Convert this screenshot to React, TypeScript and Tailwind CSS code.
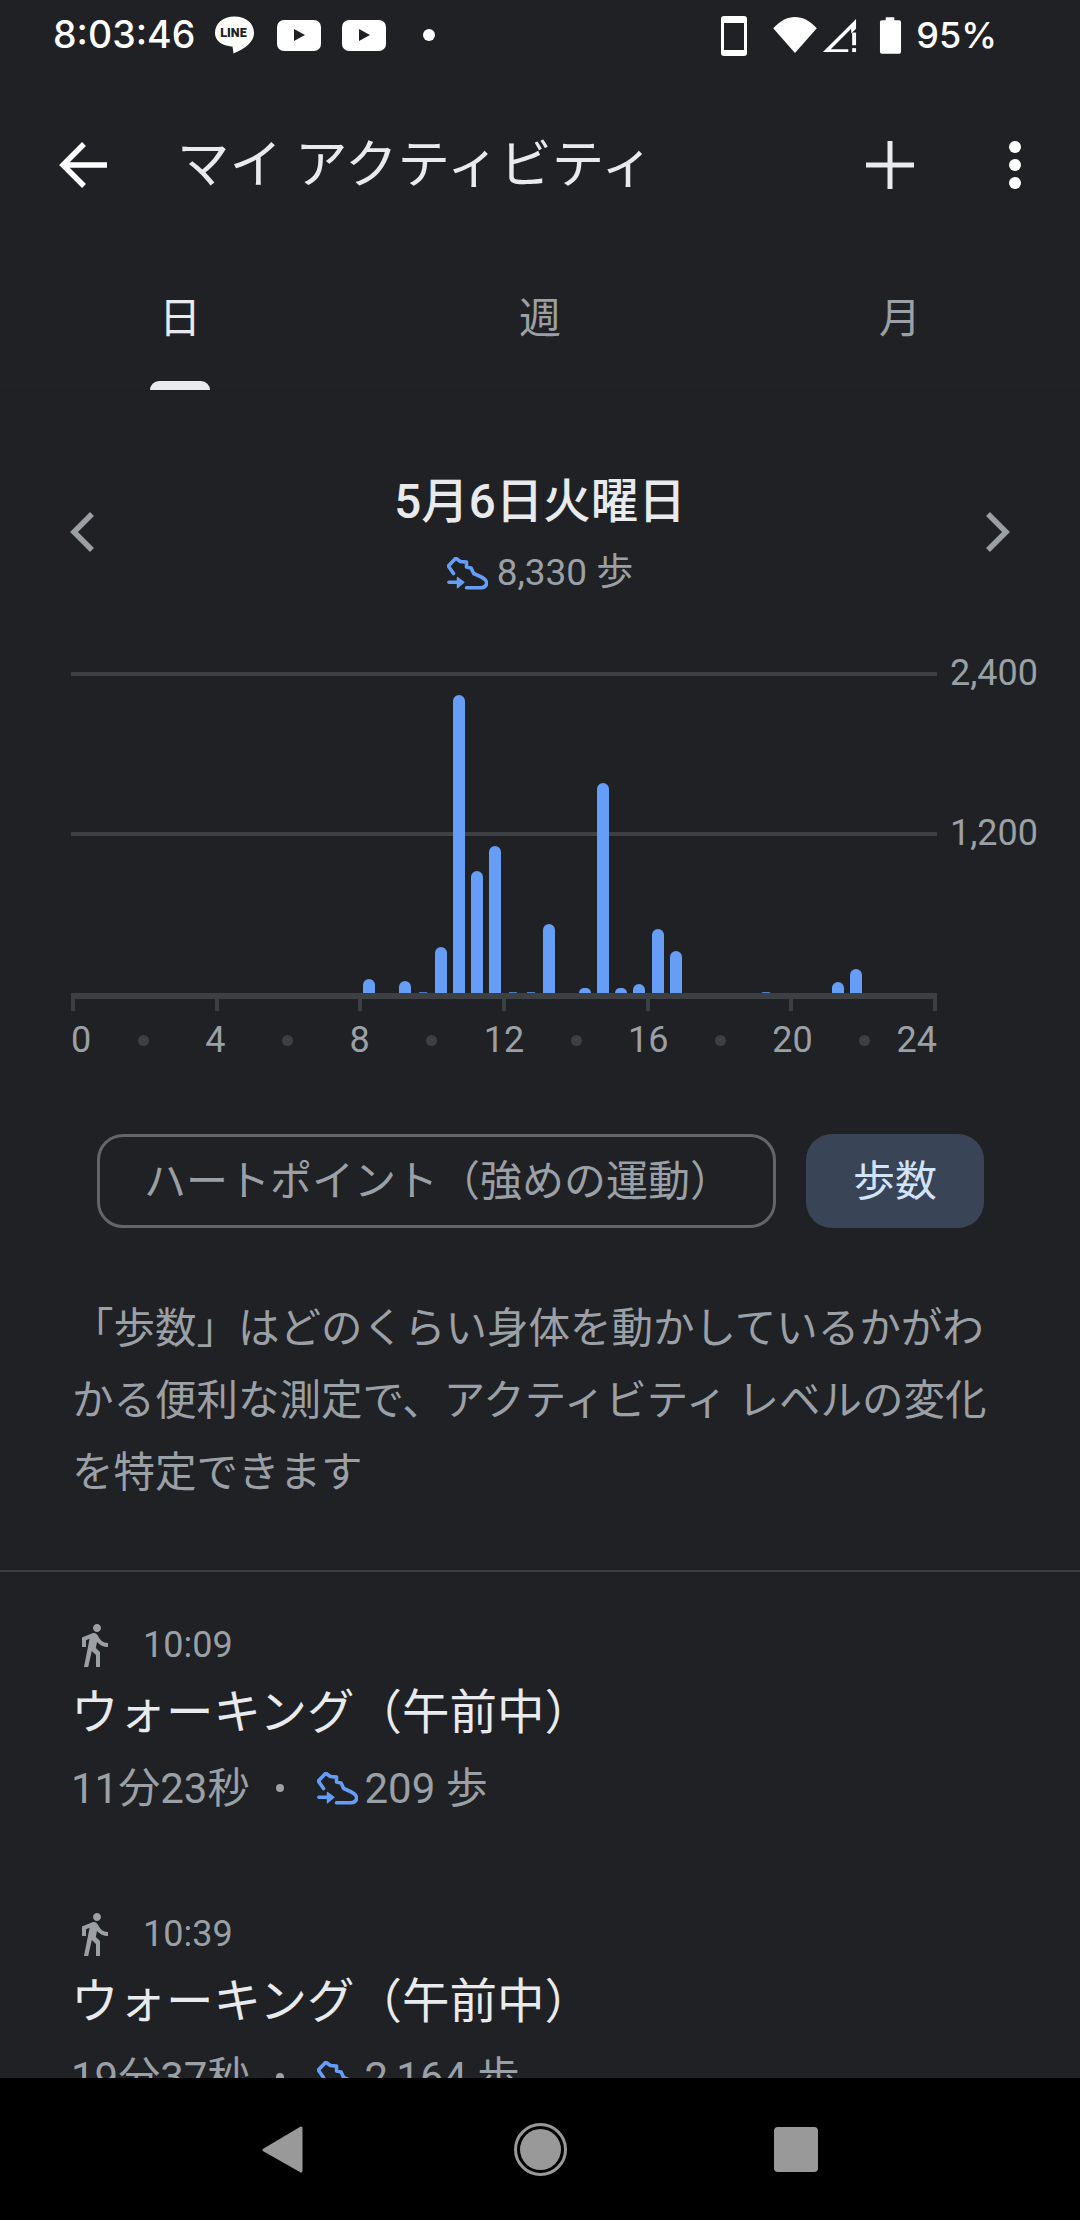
const bars: Record<number, number> = {16:14,18:12,19:1,20:46,21:298,22:122,23:147,24:1,25:1,26:69,28:5,29:210,30:5,31:9,32:64,33:42,38:1,42:11,43:24};
const slots = Array.from({ length: 48 }, (_, i) => bars[i] ?? 0);

function Shoe({ className }: { className: string }) {
  return (
    <svg viewBox="0 0 126 100" className={className} fill="none" stroke="#669df6" strokeWidth="11" strokeLinejoin="round" strokeLinecap="round">
      <path d="M60 94 H105 Q122 92 122 78 Q118 66 104 60 L82 50 L74 33 L60 30 L60 15 L41 13 L27 3 L4 27 L20 50" />
      <path d="M6 77 H36" />
      <path d="M32 62 L52 77 L32 94 Z" fill="#669df6" strokeWidth="4" />
    </svg>
  );
}

function Walker() {
  return (
    <svg viewBox="0 0 24 24" className="w-[48px] h-[48px] -ml-[1px]" fill="#9aa0a6">
      <path d="M13.5 5.5c1.1 0 2-.9 2-2s-.9-2-2-2-2 .9-2 2 .9 2 2 2zM9.8 8.9L7 23h2.1l1.8-8 2.1 2v6h2v-7.5l-2.1-2 .6-3C14.8 12 16.8 13 19 13v-2c-1.9 0-3.5-1-4.3-2.4l-1-1.6c-.4-.6-1-1-1.7-1-.3 0-.5.1-.8.1L6 8.3V13h2V9.6l1.8-.7" />
    </svg>
  );
}

function Item({ time, dur, steps }: { time: string; dur: string; steps: string }) {
  return (
    <div className="pl-[71px] h-[289px] pt-[49px]">
      <div className="flex items-center h-[48px]">
        <Walker />
        <span className="ml-[25px] text-[36px] text-[#9aa0a6]">{time}</span>
      </div>
      <div className="mt-[15px] h-[60px] flex items-center text-[47.5px] text-[#e8eaed]">ウォーキング（午前中）</div>
      <div className="mt-[20px] h-[48px] flex items-center text-[42px] text-[#9aa0a6]">
        <span>{dur}</span>
        <span className="w-[8px] h-[8px] rounded-full bg-[#9aa0a6] ml-[27px] mr-[33px] shrink-0" />
        <Shoe className="w-[41px] h-[33px]" />
        <span className="ml-[6px]">{steps} 歩</span>
      </div>
    </div>
  );
}

function YT({ className }: { className: string }) {
  return (
    <div className={`w-[44px] h-[31px] rounded-[7px] bg-white flex items-center justify-center ${className}`}>
      <div className="w-0 h-0 border-y-[6px] border-y-transparent border-l-[11px] border-l-[#202124]" />
    </div>
  );
}

export default function App() {
  return (
    <div className="w-[1080px] h-[2220px] bg-[#202124] flex flex-col overflow-hidden" style={{ fontFamily: 'Roboto, "Noto Sans CJK JP", sans-serif' }}>
      <div className="flex-1 min-h-0 overflow-hidden">
        {/* status bar */}
        <div className="h-[72px] pt-[16px] pl-[53px] pr-[83px] flex items-start justify-between text-white">
          <div className="flex items-center h-[38px]">
            <span className="font-medium text-[37.5px]" style={{ fontFamily: 'Inter, sans-serif' }}>8:03:46</span>
            <div className="relative ml-[19px] w-[41px] h-[38px]">
              <svg viewBox="0 0 42 38" className="w-[41px] h-[38px]"><path d="M21 0 C33 0 41 7 41 17 C41 26 32 33 20 38 L19 31 C8 30 1 25 1 17 C1 7 9 0 21 0 Z" fill="#fff" /></svg>
              <span className="absolute left-[6px] top-[8px] text-[12.5px] leading-[18px] font-black text-[#202124]">LINE</span>
            </div>
            <YT className="ml-[22px]" />
            <YT className="ml-[21px]" />
            <div className="ml-[37px] w-[12px] h-[12px] rounded-full bg-white" />
          </div>
          <div className="flex items-center h-[38px]">
            <div className="w-[26px] h-[40px] rounded-[3px] border-[3px] border-white border-t-[7px] border-b-[6px] mt-[2px]" />
            <svg viewBox="0 0 46 38" className="ml-[26px] w-[44px] h-[36px]"><path d="M0 12 C14 -4 32 -4 46 12 L23 38 Z" fill="#fff" /></svg>
            <svg viewBox="0 0 38 38" className="ml-[4px] w-[37px] h-[37px]"><path d="M2 36 L36 2 V12 L31 17 V12 L10 33 H28 V36 Z" fill="#fff" /><rect x="32" y="16" width="4" height="13" fill="#fff" /><rect x="32" y="32" width="4" height="4" fill="#fff" /></svg>
            <svg viewBox="0 0 24 38" className="ml-[21px] w-[23px] h-[37px]"><path d="M7 0 H16 V3 H21 Q23 3 23 5 V36 Q23 38 21 38 H3 Q1 38 1 36 V5 Q1 3 3 3 H7 Z" fill="#fff" /></svg>
            <span className="ml-[14px] font-medium text-[36px]" style={{ fontFamily: 'Inter, sans-serif' }}>95%</span>
          </div>
        </div>
        {/* toolbar */}
        <div className="h-[186px] flex items-center">
          <svg viewBox="0 0 48 48" className="ml-[59px] w-[48px] h-[48px]" fill="none" stroke="#fff" strokeWidth="5.5"><path d="M48 24 H5 M25 3 L4 24 L25 45" /></svg>
          <span className="ml-[70px] text-[52.5px] text-[#e8eaed]">マイ アクティビティ</span>
          <svg viewBox="0 0 48 48" className="ml-auto w-[48px] h-[48px]" fill="none" stroke="#e8eaed" strokeWidth="5"><path d="M24 0 V48 M0 24 H48" /></svg>
          <div className="ml-[95px] mr-[59px] flex flex-col gap-[6px]">
            <div className="w-[12px] h-[12px] rounded-full bg-white" />
            <div className="w-[12px] h-[12px] rounded-full bg-white" />
            <div className="w-[12px] h-[12px] rounded-full bg-white" />
          </div>
        </div>
        {/* tabs */}
        <div className="h-[133px] grid grid-cols-3 text-[42px] leading-[60px] border-b border-[#1d1e21]">
          <div className="relative flex justify-center pt-[31px] text-[#e8eaed]">
            <span>日</span>
            <div className="absolute bottom-0 left-[150px] w-[60px] h-[9px] rounded-t-[9px] bg-[#e8eaed]" />
          </div>
          <div className="flex justify-center pt-[31px] text-[#9aa0a6]">週</div>
          <div className="flex justify-center pt-[31px] text-[#9aa0a6]">月</div>
        </div>
        {/* date */}
        <div className="relative mt-[84px] flex flex-col items-center">
          <div className="h-[56px] flex items-center text-[47.5px] font-medium text-[#e8eaed]">5月6日火曜日</div>
          <div className="mt-[20px] h-[44px] flex items-center text-[37px] text-[#9aa0a6]">
            <Shoe className="w-[41px] h-[33px]" />
            <span className="ml-[9px]">8,330 歩</span>
          </div>
          <svg viewBox="0 0 24 40" className="absolute left-[70px] top-[37px] w-[24px] h-[40px]" fill="none" stroke="#9aa0a6" strokeWidth="5.5"><path d="M22 2 L4 20 L22 38" /></svg>
          <svg viewBox="0 0 24 40" className="absolute right-[70px] top-[37px] w-[24px] h-[40px]" fill="none" stroke="#9aa0a6" strokeWidth="5.5"><path d="M2 2 L20 20 L2 38" /></svg>
        </div>
        {/* chart */}
        <div className="relative mt-[77px] ml-[71px] w-[866px] h-[321px]">
          <div className="absolute left-0 right-0 top-0 h-[4px] bg-[#3c4043]" />
          <div className="absolute left-0 right-0 top-[160px] h-[4px] bg-[#3c4043]" />
          <span className="absolute left-[879px] top-[-19px] text-[36px] leading-[40px] text-[#9aa0a6]">2,400</span>
          <span className="absolute left-[879px] top-[141px] text-[36px] leading-[40px] text-[#9aa0a6]">1,200</span>
          <div className="absolute left-0 right-0 bottom-0 h-[321px] flex items-end">
            {slots.map((h, i) => (
              <div key={i} className="flex-1 flex justify-center">
                {h > 1 && <div className="w-[12px] rounded-t-[6px] bg-[#669df6]" style={{ height: h }} />}
                {h === 1 && <div className="w-[8px] h-[1px] bg-[#4f7bc4]" />}
              </div>
            ))}
          </div>
        </div>
        <div className="ml-[71px] w-[866px] h-[6px] bg-[#3c4043]" />
        <div className="ml-[71px] w-[866px] flex justify-between h-[12px]">
          {[0,1,2,3,4,5,6].map((i) => <div key={i} className="w-[4px] h-[12px] bg-[#3c4043]" />)}
        </div>
        <div className="ml-[71px] w-[866px] h-[36px] mt-[11px] flex justify-between items-center text-[36px] text-[#9aa0a6]">
          {['0','•','4','•','8','•','12','•','16','•','20','•','24'].map((t, i) => (
            <div key={i} className={`w-0 flex ${i === 0 ? 'justify-start' : i === 12 ? 'justify-end' : 'justify-center'}`}>
              {t === '•'
                ? <div className="w-[11px] h-[11px] rounded-full bg-[#3c4043] shrink-0" />
                : <span className="shrink-0">{t}</span>}
            </div>
          ))}
        </div>
        {/* chips */}
        <div className="mt-[76px] ml-[97px] flex gap-[30px] text-[42px]">
          <div className="w-[679px] h-[94px] rounded-[26px] border-[3px] border-[#636569] pl-[44px] flex items-center text-[#9aa0a6]">ハートポイント（強めの運動）</div>
          <div className="w-[178px] h-[94px] rounded-[26px] bg-[#394457] flex items-center justify-center text-[#d2e3fc]">歩数</div>
        </div>
        <p className="mt-[65px] mx-[72px] text-[41.5px] leading-[72px] text-[#9aa0a6]">「歩数」はどのくらい身体を動かしているかがわかる便利な測定で、アクティビティ レベルの変化を特定できます</p>
        <div className="mt-[61px] h-[2px] bg-[#3c4043]" />
        <Item time="10:09" dur="11分23秒" steps="209" />
        <Item time="10:39" dur="19分37秒" steps="2,164" />
      </div>
      <div className="h-[142px] bg-black shrink-0 flex items-center pl-[262px]">
        <svg viewBox="0 0 41 47" className="w-[41px] h-[47px]"><path d="M39 2 V45 L2 24 Z" fill="#999" stroke="#999" strokeWidth="3" strokeLinejoin="round" /></svg>
        <div className="ml-[211px] w-[53px] h-[53px] rounded-full border-[3px] border-[#999] p-[3px]"><div className="w-full h-full rounded-full bg-[#999]" /></div>
        <div className="ml-[207px] w-[44px] h-[45px] rounded-[4px] bg-[#999]" />
      </div>
    </div>
  );
}
